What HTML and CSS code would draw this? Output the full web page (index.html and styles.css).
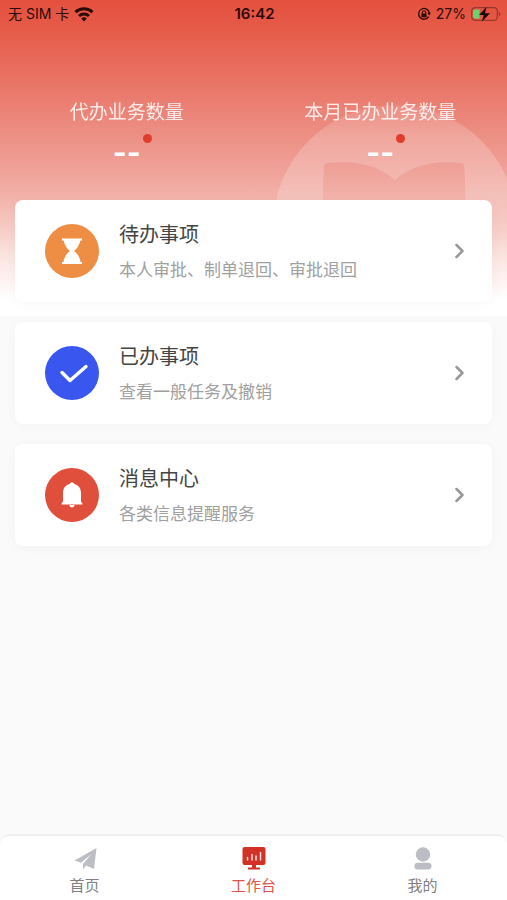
FILE: index.html
```html
<!DOCTYPE html>
<html lang="zh-CN">
<head>
<meta charset="utf-8">
<meta name="viewport" content="width=device-width, initial-scale=1">
<title>工作台</title>
<link rel="stylesheet" href="styles.css">
</head>
<body>
<div class="app">
  <div class="backdrop" aria-hidden="true">
    <svg class="emblem" viewBox="0 0 244 244">
      <path fill="#fff" fill-opacity=".2" fill-rule="evenodd" d="M122 0a122 122 0 1 0 0 244a122 122 0 1 0 0-244ZM51 62Q51 58 56 58C82 55 105 60 122 75C139 60 163 55 187 58Q191 58 191 62Q193 80 192 140H51Q49 90 51 62Z"/>
    </svg>
  </div>

  <header class="status">
    <div class="status-side">
      <span>无 SIM 卡</span>
      <svg class="wifi" viewBox="0 0 20 15" fill="none" stroke="#2b0b08" stroke-width="3">
        <path d="M1.5 5.200a12.500 12.500 0 0 1 17 0"/>
        <path d="M5 9a7.400 7.400 0 0 1 10 0"/>
        <path d="M7.200 11.600a4 4 0 0 1 5.600 0L10 14.500Z" fill="#2b0b08" stroke="none"/>
      </svg>
    </div>
    <time class="clock">16:42</time>
    <div class="status-side status-end">
      <svg class="lock" viewBox="0 0 14 14" fill="none" stroke="#2b0b08">
        <path stroke-width="1.3" d="M11.700 9.600A5.400 5.400 0 1 1 12.400 6"/>
        <path fill="#2b0b08" stroke="none" d="M10.300 5.800h3.600l-1.600 2.800ZM4.400 6.400h5.200v3.800H4.400Z"/>
        <path stroke-width="1.1" d="M5.400 6.800V5.400a1.600 1.600 0 0 1 3.200 0v1.400"/>
      </svg>
      <span>27%</span>
      <svg class="battery" viewBox="0 0 30 16">
        <rect x=".7" y="1.7" width="25.6" height="12.6" rx="3.5" fill="none" stroke="#98382d" stroke-width="1.2"/>
        <path d="M27.800 5.600q3 2.400 0 4.800Z" fill="#98382d"/>
        <path d="M4 3.400h4.600v9.200H4q-2 0-2-2V5.400q0-2 2-2Z" fill="#69d36c"/>
        <path d="M15.500 1 8 9h4.700l-1.800 6.400L19 7.200h-5Z" fill="#160504"/>
      </svg>
    </div>
  </header>

  <section class="stats">
    <div class="stat">
      <h2>代办业务数量</h2>
      <p class="value">--<i class="dot"></i></p>
    </div>
    <div class="stat">
      <h2>本月已办业务数量</h2>
      <p class="value">--<i class="dot"></i></p>
    </div>
  </section>

  <main class="cards">
    <a class="card" href="#todo">
      <svg class="badge" viewBox="0 0 54 54">
        <circle cx="27" cy="27" r="27" fill="#ee8e45"/>
        <path fill="#fff" d="M17 14.500h20v2h-1.700c-.9 4.500-3 8-6.300 10.500 3.500 2.500 5.900 6.500 6.500 11H37v2H17v-2h1.500c.6-4.500 3-8.500 6.500-11-3.300-2.500-5.400-6-6.300-10.500H17Z"/>
      </svg>
      <span class="copy"><strong>待办事项</strong><small>本人审批、制单退回、审批退回</small></span>
      <svg class="chevron" viewBox="0 0 12 18"><path d="m2.500 3 6 6-6 6"/></svg>
    </a>
    <a class="card" href="#done">
      <svg class="badge" viewBox="0 0 54 54">
        <circle cx="27" cy="27" r="27" fill="#3956ef"/>
        <path d="m17 26.500 8 8 16-14" fill="none" stroke="#fff" stroke-width="3.400" stroke-linecap="round" stroke-linejoin="round"/>
      </svg>
      <span class="copy"><strong>已办事项</strong><small>查看一般任务及撤销</small></span>
      <svg class="chevron" viewBox="0 0 12 18"><path d="m2.500 3 6 6-6 6"/></svg>
    </a>
    <a class="card" href="#messages">
      <svg class="badge" viewBox="0 0 54 54">
        <circle cx="27" cy="27" r="27" fill="#e04e3c"/>
        <path fill="#fff" d="M27 14.500c1.300 0 2 .6 2.300 1.400 4.500 1.300 6.700 4.600 6.700 9v8.500l1.400 2.200v.9H16.600v-.9l1.400-2.200v-8.500c0-4.400 2.200-7.700 6.700-9 .3-.8 1-1.400 2.300-1.400ZM24.500 37h5c0 1.600-1 2.500-2.500 2.500s-2.500-.9-2.500-2.500Z"/>
      </svg>
      <span class="copy"><strong>消息中心</strong><small>各类信息提醒服务</small></span>
      <svg class="chevron" viewBox="0 0 12 18"><path d="m2.500 3 6 6-6 6"/></svg>
    </a>
  </main>

  <nav class="tabs">
    <a class="tab" href="#home">
      <svg viewBox="0 0 24 24" fill="#bdbdc5"><path d="M23.500 1 1.500 13.500l6.500 2.300L18.500 7 10 17v5.500l3-4 8 3.500Z"/></svg>
      <span>首页</span>
    </a>
    <a class="tab active" href="#work" aria-current="page">
      <svg viewBox="0 0 24 24"><path fill="#d33125" d="M2.500 0h19Q23.500 0 23.500 2v14q0 2-2 2H14v2.500h4v2H6v-2h4V18H2.500q-2 0-2-2V2q0-2 2-2Z"/><path fill="none" stroke="#fff" stroke-opacity=".85" stroke-width="1.500" stroke-linecap="round" d="M5.500 10.500V13M10 7.500V13M14 9v4M18.500 5.500V13"/></svg>
      <span>工作台</span>
    </a>
    <a class="tab" href="#me">
      <svg viewBox="0 0 24 24" fill="#bdbdc5"><circle cx="12" cy="7.500" r="7.200"/><rect x="3.500" y="15.800" width="17" height="6.700" rx="3.300"/></svg>
      <span>我的</span>
    </a>
  </nav>
</div>
</body>
</html>
```
FILE: styles.css
```css
* {
  box-sizing: border-box;
}

body {
  margin: 0;
  background: #fafafa;
  font-family: Inter, "Noto Sans CJK SC", sans-serif;
}

.app {
  position: relative;
  display: flex;
  flex-direction: column;
  min-height: 100vh;
}

.backdrop {
  position: absolute;
  inset: 0 0 auto;
  height: 316px;
  overflow: hidden;
  background: linear-gradient(#e5503e 0, #e65b49 30px, #ea7d70 100px, #f0a79e 180px, #f3b8b0 205px, #fbe3df 255px, #fff 300px);
}

.emblem {
  position: absolute;
  top: 105px;
  right: -10px;
  width: 244px;
  height: 244px;
  -webkit-mask-image: linear-gradient(rgb(0 0 0 / 50%), #000 30px, #000 90px, transparent 130px);
  mask-image: linear-gradient(rgb(0 0 0 / 50%), #000 30px, #000 90px, transparent 130px);
}

.status {
  position: relative;
  display: grid;
  grid-template-columns: 1fr auto 1fr;
  align-items: center;
  height: 28px;
  padding: 0 6px 0 8px;
  color: #2b0b08;
  font-size: 14px;
  line-height: 20px;
}

.status-side {
  display: flex;
  align-items: center;
  gap: 5px;
}

.status-end {
  justify-content: flex-end;
}

.clock {
  font-size: 15px;
  font-weight: 600;
}

.wifi {
  width: 20px;
  height: 15px;
}

.lock {
  width: 14px;
  height: 14px;
}

.battery {
  width: 30px;
  height: 16px;
}

.stats {
  position: relative;
  display: grid;
  grid-template-columns: 1fr 1fr;
  height: 172px;
  padding-top: 71px;
  color: #fff;
  text-align: center;
}

.stat h2 {
  margin: 0;
  font-size: 19px;
  font-weight: 400;
  line-height: 28px;
  opacity: .85;
}

.value {
  position: relative;
  width: max-content;
  margin: 9px auto 0;
  font-size: 30px;
  font-weight: 700;
  line-height: 32px;
}

.dot {
  position: absolute;
  top: -2px;
  right: -11px;
  width: 9px;
  height: 9px;
  border-radius: 50%;
  background: #e03c2b;
}

.cards {
  position: relative;
  display: grid;
  gap: 20px;
  padding: 0 15px 20px;
}

.card {
  display: flex;
  align-items: center;
  gap: 20px;
  height: 102px;
  padding: 0 26px 0 30px;
  border-radius: 8px;
  background: #fff;
  box-shadow: 0 2px 12px rgb(0 0 0 / 3%);
  color: #444;
  text-decoration: none;
}

.badge {
  width: 54px;
  height: 54px;
}

.copy {
  display: grid;
  flex: 1;
  gap: 7px;
}

.copy strong {
  font-size: 20px;
  font-weight: 400;
  line-height: 30px;
}

.copy small {
  color: #a0a0a0;
  font-size: 17px;
  line-height: 26px;
}

.chevron {
  width: 12px;
  height: 18px;
  fill: none;
  stroke: #999;
  stroke-width: 2.5;
  stroke-linecap: round;
  stroke-linejoin: round;
}

.tabs {
  position: relative;
  display: grid;
  grid-template-columns: repeat(3, 1fr);
  margin-top: auto;
  padding: 11px 0 3px;
  border-top: 2px solid #eee;
  border-radius: 10px 10px 0 0;
  background: #fff;
}

.tab {
  display: flex;
  flex-direction: column;
  align-items: center;
  gap: 4px;
  color: #808080;
  font-size: 15px;
  line-height: 22px;
  text-decoration: none;
}

.tab svg {
  width: 24px;
  height: 24px;
}

.active {
  color: #e0554a;
}
```
